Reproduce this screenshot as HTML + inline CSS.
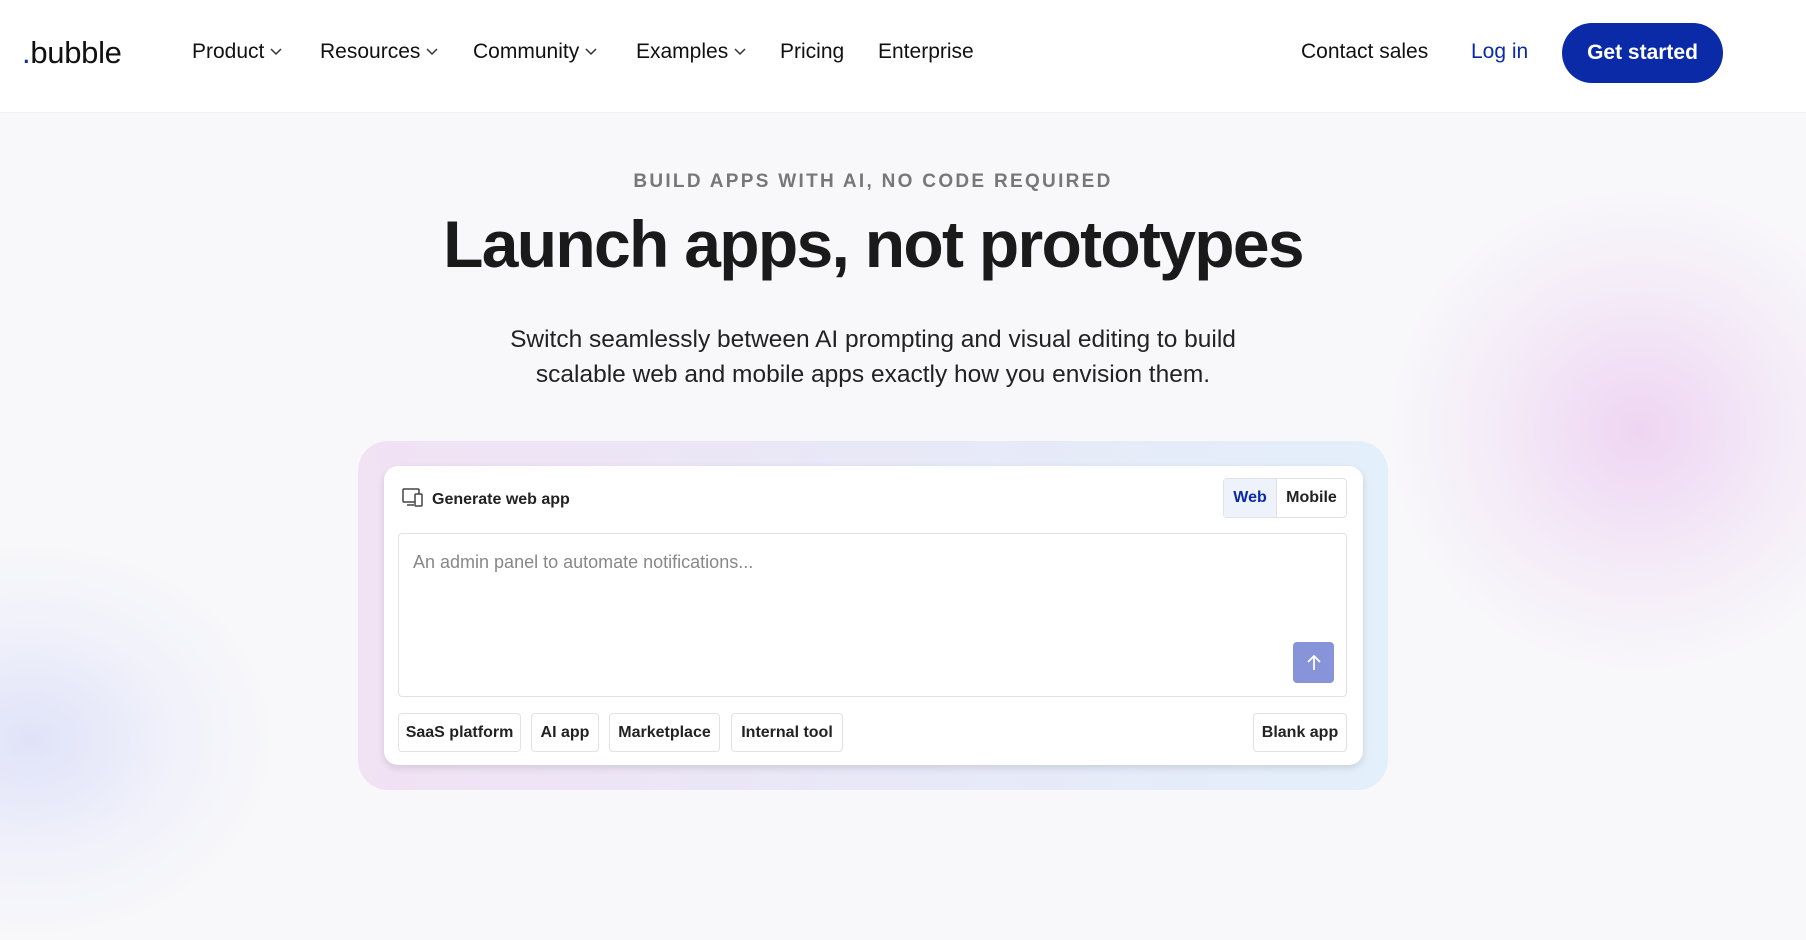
<!DOCTYPE html>
<html><head><meta charset="utf-8"><style>
*{margin:0;padding:0;box-sizing:border-box}
body{width:1806px;height:848px;overflow:hidden;background:#f8f8fa;font-family:"Liberation Sans",sans-serif;color:#1a1a1a;position:relative}
.blob1{position:absolute;left:1380px;top:180px;width:520px;height:500px;border-radius:50%;background:radial-gradient(closest-side,rgba(236,205,240,.8),rgba(240,220,245,.4) 60%,rgba(248,248,250,0));}
.blob2{position:absolute;left:-220px;top:540px;width:500px;height:400px;border-radius:50%;background:radial-gradient(closest-side,rgba(218,221,248,.8),rgba(228,230,250,.35) 60%,rgba(248,248,250,0));}
nav{position:absolute;left:0;top:0;width:1806px;height:113px;background:#fff;border-bottom:1px solid #f0f0f2}
.logo{position:absolute;left:22px;top:35px;font-size:31px;font-weight:500;letter-spacing:-0.3px;color:#111}
.logo i{color:#0a2aa8;font-style:normal}
.ni{position:absolute;top:40px;font-size:21px;color:#111;white-space:nowrap}
.ni svg{margin-left:6px;vertical-align:middle}
.btn{position:absolute;left:1562px;top:23px;width:161px;height:60px;border-radius:30px;background:#0a2aa8;color:#fff;font-size:21px;font-weight:bold;display:flex;align-items:center;justify-content:center}
.eyebrow{position:absolute;top:171px;width:1746px;text-align:center;font-size:19px;letter-spacing:2.3px;color:#777;font-weight:bold}
h1{position:absolute;top:206px;width:1746px;text-align:center;font-size:66px;font-weight:bold;letter-spacing:-1.7px;color:#1a1a1a}
.sub{position:absolute;top:322px;width:1746px;text-align:center;font-size:24.5px;line-height:35px;color:#222}
.outer{position:absolute;left:358px;top:441px;width:1030px;height:349px;border-radius:30px;background:linear-gradient(90deg,#f1e2f4,#e8e8f7 50%,#e3effa)}
.inner{position:absolute;left:384px;top:466px;width:979px;height:299px;border-radius:14px;background:#fff;box-shadow:0 3px 8px rgba(0,0,0,.12)}
.gen{position:absolute;left:402px;top:488px;font-size:16px;font-weight:bold;color:#222}
.gen svg{vertical-align:-4px;margin-right:8px}
.tog{position:absolute;left:1223px;top:478px;width:124px;height:40px;border:1px solid #e2e2e6;border-radius:4px;display:flex;font-size:16px;font-weight:bold}
.tog div{display:flex;align-items:center;justify-content:center}
.ta{position:absolute;left:398px;top:533px;width:949px;height:164px;border:1px solid #e2e2e6;border-radius:4px}
.ph{position:absolute;left:14px;top:18px;font-size:18px;color:#888}
.send{position:absolute;left:894px;top:108px;width:41px;height:41px;border-radius:4px;background:#8794d9;display:flex;align-items:center;justify-content:center}
.chip{position:absolute;top:713px;height:39px;border:1px solid #e2e2e6;border-radius:4px;font-size:16px;font-weight:bold;color:#222;display:flex;align-items:center;justify-content:center}
</style></head><body>
<div class="blob1"></div><div class="blob2"></div>
<nav>
<div class="logo"><i>.</i>bubble</div>
<div class="ni" style="left:192px">Product<svg width="12" height="8" viewBox="0 0 12 8"><path d="M1 1l5 5 5-5" fill="none" stroke="#333" stroke-width="1.5"/></svg></div>
<div class="ni" style="left:320px">Resources<svg width="12" height="8" viewBox="0 0 12 8"><path d="M1 1l5 5 5-5" fill="none" stroke="#333" stroke-width="1.5"/></svg></div>
<div class="ni" style="left:473px">Community<svg width="12" height="8" viewBox="0 0 12 8"><path d="M1 1l5 5 5-5" fill="none" stroke="#333" stroke-width="1.5"/></svg></div>
<div class="ni" style="left:636px">Examples<svg width="12" height="8" viewBox="0 0 12 8"><path d="M1 1l5 5 5-5" fill="none" stroke="#333" stroke-width="1.5"/></svg></div>
<div class="ni" style="left:780px">Pricing</div>
<div class="ni" style="left:878px">Enterprise</div>
<div class="ni" style="left:1301px">Contact sales</div>
<div class="ni" style="left:1471px;color:#0a2aa8">Log in</div>
<div class="btn">Get started</div>
</nav>
<div class="eyebrow">BUILD APPS WITH AI, NO CODE REQUIRED</div>
<h1>Launch apps, not prototypes</h1>
<div class="sub">Switch seamlessly between AI prompting and visual editing to build<br>scalable web and mobile apps exactly how you envision them.</div>
<div class="outer"></div>
<div class="inner"></div>
<div class="gen"><svg width="22" height="20" viewBox="0 0 22 20"><rect x="1" y="1" width="16" height="13" rx="1" fill="none" stroke="#444" stroke-width="1.5"/><rect x="13" y="6" width="7" height="12" rx="1" fill="#fff" stroke="#444" stroke-width="1.5"/><path d="M5 17h7" stroke="#444" stroke-width="1.5"/></svg>Generate web app</div>
<div class="tog"><div style="width:53px;background:#eef2fb;color:#0a2aa8;border-right:1px solid #e2e2e6">Web</div><div style="flex:1;color:#222">Mobile</div></div>
<div class="ta"><div class="ph">An admin panel to automate notifications...</div>
<div class="send"><svg width="16" height="18" viewBox="0 0 16 18"><path d="M8 16V2M2 8l6-6 6 6" fill="none" stroke="#fff" stroke-width="1.8"/></svg></div></div>
<div class="chip" style="left:398px;width:123px">SaaS platform</div>
<div class="chip" style="left:531px;width:68px">AI app</div>
<div class="chip" style="left:609px;width:111px">Marketplace</div>
<div class="chip" style="left:731px;width:112px">Internal tool</div>
<div class="chip" style="left:1253px;width:94px">Blank app</div>
</body></html>
